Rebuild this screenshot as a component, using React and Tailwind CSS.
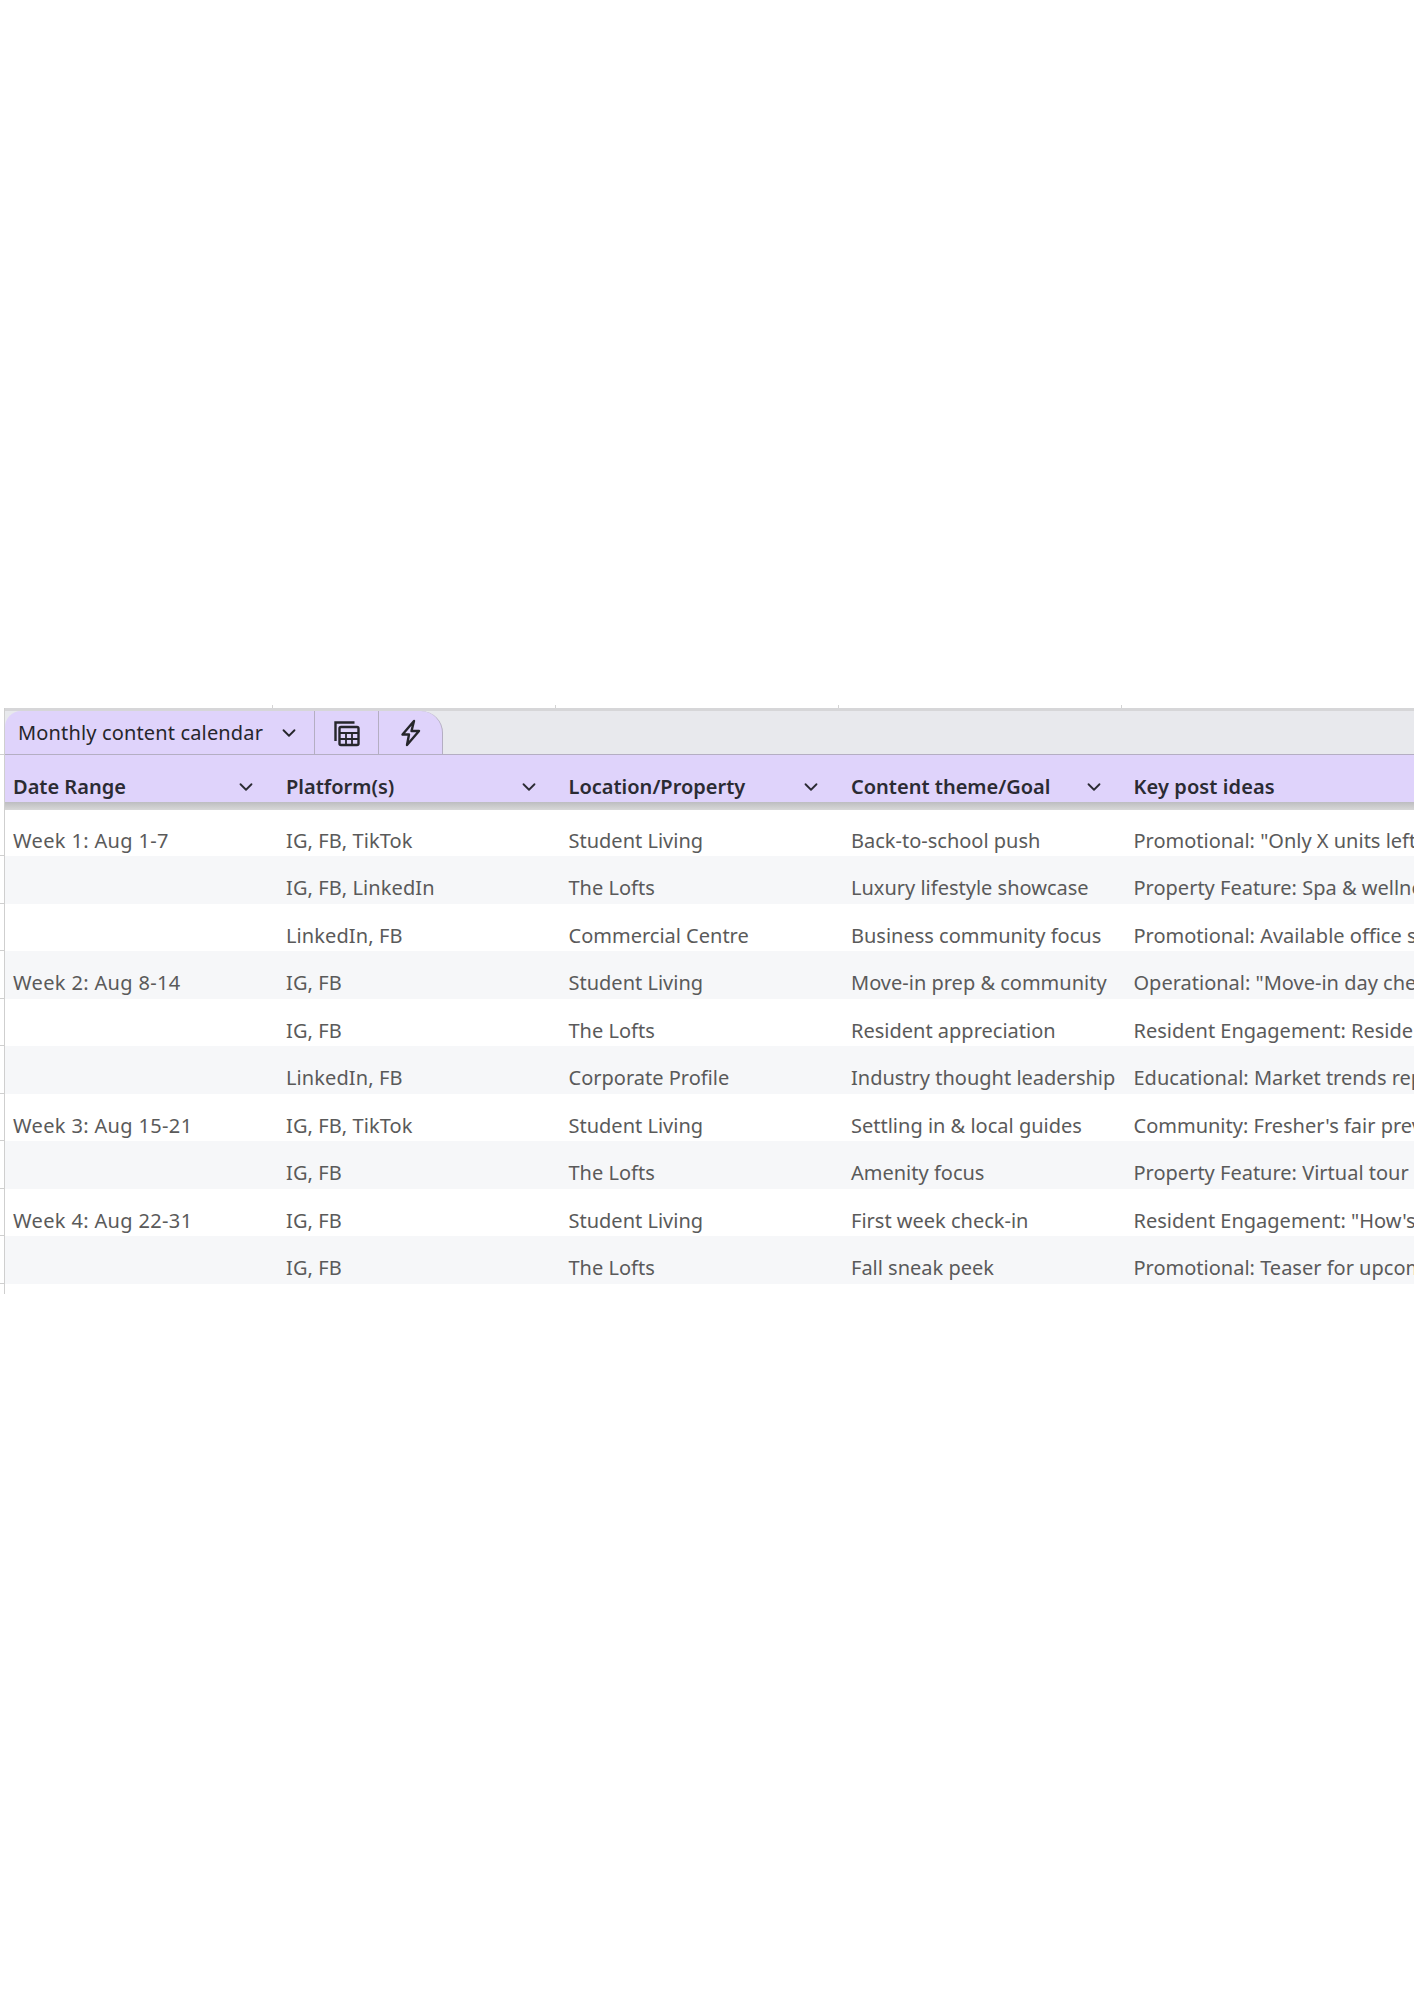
import { ChevronDown } from 'lucide-react';

const rows = [
    ['Week 1: Aug 1-7', 'IG, FB, TikTok', 'Student Living', 'Back-to-school push', 'Promotional: "Only X units left for fall move-in"'],
    ['', 'IG, FB, LinkedIn', 'The Lofts', 'Luxury lifestyle showcase', 'Property Feature: Spa & wellness center tour'],
    ['', 'LinkedIn, FB', 'Commercial Centre', 'Business community focus', 'Promotional: Available office suites overview'],
    ['Week 2: Aug 8-14', 'IG, FB', 'Student Living', 'Move-in prep & community', 'Operational: "Move-in day checklist" reel'],
    ['', 'IG, FB', 'The Lofts', 'Resident appreciation', 'Resident Engagement: Resident spotlight'],
    ['', 'LinkedIn, FB', 'Corporate Profile', 'Industry thought leadership', 'Educational: Market trends report'],
    ['Week 3: Aug 15-21', 'IG, FB, TikTok', 'Student Living', 'Settling in & local guides', "Community: Fresher's fair preview"],
    ['', 'IG, FB', 'The Lofts', 'Amenity focus', 'Property Feature: Virtual tour of the gym'],
    ['Week 4: Aug 22-31', 'IG, FB', 'Student Living', 'First week check-in', 'Resident Engagement: "How\'s your first week?"'],
    ['', 'IG, FB', 'The Lofts', 'Fall sneak peek', 'Promotional: Teaser for upcoming events'],
];

const headers = ['Platform(s)', 'Location/Property', 'Content theme/Goal'];

function TableIcon() {
    return (
        <svg width="28" height="28" viewBox="0 0 28 28" fill="none" stroke="#26262b" strokeWidth="2.4">
            <path d="M2.5 22V3.5h19" />
            <rect x="6.5" y="8" width="19" height="18" rx="1.5" />
            <path d="M6.5 14h19M6.5 20h19M13 14v12M19 14v12" strokeWidth="1.8" />
        </svg>
    );
}

function BoltIcon() {
    return (
        <svg width="24" height="28" viewBox="0 0 24 28" fill="none" stroke="#26262b" strokeWidth="2.4" strokeLinejoin="round">
            <path d="M15 2 3.5 15.5H10L8 26l12-14h-7.5z" />
        </svg>
    );
}

export default function App() {
    return (
        <div className="w-[1414px] h-[2000px] overflow-hidden bg-white pt-[705px] font-['Noto_Sans',sans-serif]">
            <div className="flex h-[3px] pl-[4px]">
                <div className="w-[269px] border-r border-[#d4d4d4]" />
                <div className="w-[283px] border-r border-[#d4d4d4]" />
                <div className="w-[283px] border-r border-[#d4d4d4]" />
                <div className="w-[283px] border-r border-[#d4d4d4]" />
            </div>
            <div className="flex h-[47px]">
                <div className="w-[5px] shrink-0 border-r border-b border-[#cfcfcf]" />
                <div className="flex-1 flex bg-[#e8e9ed] border-t-[3px] border-[#d6d6d8] border-b border-b-[#b4aec2]">
                    <div className="flex h-full w-[438px] bg-[#dfd3fb] rounded-tl-[16px] rounded-tr-[22px] border-r border-[#b4aec2]">
                        <div className="w-[310px] shrink-0 flex items-center justify-between pl-[13px] pr-[14px] border-r border-[#b4aec2] text-[20px] tracking-[0.15px] text-[#26262b]">
                            Monthly content calendar
                            <ChevronDown size={22} strokeWidth={2} />
                        </div>
                        <div className="w-[64px] shrink-0 flex items-center justify-center border-r border-[#b4aec2]">
                            <TableIcon />
                        </div>
                        <div className="flex-1 flex items-center justify-center">
                            <BoltIcon />
                        </div>
                    </div>
                </div>
            </div>
            <div className="flex">
                <div className="w-[5px] shrink-0 border-r border-[#cfcfcf]" />
                <div className="flex-1 flex h-[47px] items-end pb-[3px] bg-[#dfd3fb] text-[20px] leading-[24px] font-semibold text-[#2b2b33]">
                    <div className="w-[272px] shrink-0 flex items-center justify-between pl-[8px] pr-[20px]">
                        Date Range
                        <ChevronDown size={22} strokeWidth={2} />
                    </div>
                    {headers.map((h) => (
                        <div key={h} className="w-[282.5px] shrink-0 flex items-center justify-between pl-[9px] pr-[20px]">
                            {h}
                            <ChevronDown size={22} strokeWidth={2} />
                        </div>
                    ))}
                    <div className="pl-[9px] whitespace-nowrap tracking-[0.1px]">Key post ideas</div>
                </div>
            </div>
            <div className="flex h-[8px]">
                <div className="w-[5px] shrink-0 border-r border-[#cfcfcf]" />
                <div className="flex-1 bg-linear-to-b from-[#bdbdc0] to-[#d8d8d8]" />
            </div>
            {rows.map((row, i) => (
                <div key={i} className={i === 0 ? 'flex h-[46px]' : 'flex h-[47.5px]'}>
                    <div className="w-[5px] shrink-0 border-r border-b border-[#cfcfcf]" />
                    <div className={i % 2 === 1 ? 'flex-1 flex items-end pb-[0.5px] bg-[#f6f7f9] text-[20px] text-[#5a5a5a] whitespace-nowrap' : 'flex-1 flex items-end pb-[0.5px] bg-white text-[20px] text-[#5a5a5a] whitespace-nowrap'}>
                        <div className="w-[272px] shrink-0 pl-[8px] tracking-[0.35px]">{row[0]}</div>
                        <div className="w-[282.5px] shrink-0 pl-[9px] tracking-[0.1px]">{row[1]}</div>
                        <div className="w-[282.5px] shrink-0 pl-[9px]">{row[2]}</div>
                        <div className="w-[282.5px] shrink-0 pl-[9px]">{row[3]}</div>
                        <div className="pl-[9px]">{row[4]}</div>
                    </div>
                </div>
            ))}
            <div className="w-[5px] h-[10px] border-r border-[#cfcfcf]" />
        </div>
    );
}
